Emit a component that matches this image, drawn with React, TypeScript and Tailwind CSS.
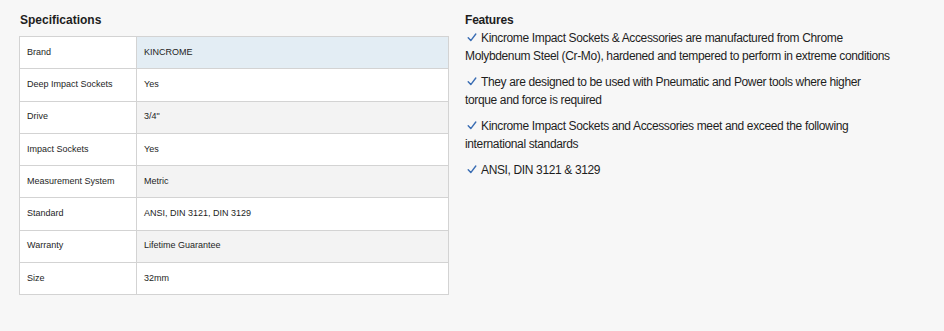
const specs = [
  { label: "Brand", value: "KINCROME" },
  { label: "Deep Impact Sockets", value: "Yes" },
  { label: "Drive", value: "3/4\"" },
  { label: "Impact Sockets", value: "Yes" },
  { label: "Measurement System", value: "Metric" },
  { label: "Standard", value: "ANSI, DIN 3121, DIN 3129" },
  { label: "Warranty", value: "Lifetime Guarantee" },
  { label: "Size", value: "32mm" },
]

const features = [
  "Kincrome Impact Sockets & Accessories are manufactured from Chrome Molybdenum Steel (Cr-Mo), hardened and tempered to perform in extreme conditions",
  "They are designed to be used with Pneumatic and Power tools where higher torque and force is required",
  "Kincrome Impact Sockets and Accessories meet and exceed the following international standards",
  "ANSI, DIN 3121 & 3129",
]

export default function App() {
  return (
    <main
      className="min-h-[331px] w-full bg-[#f7f7f7] text-[#1e1e1e] flex gap-4 pl-[19px] pt-[12px]"
      style={{ fontFamily: '"Liberation Sans", Arial, sans-serif' }}
    >
      <section className="w-[430px] shrink-0">
        <h3 className="text-[12px] font-bold leading-[16px] pl-px mb-[8px]">
          Specifications
        </h3>
        <table className="w-full border-collapse text-[9px]">
          <tbody>
            {specs.map((spec, index) => (
              <SpecRow
                key={spec.label}
                label={spec.label}
                value={spec.value}
                highlight={index === 0}
                striped={index % 2 === 0}
              />
            ))}
          </tbody>
        </table>
      </section>

      <section className="w-[428px]">
        <h3 className="text-[12px] font-bold leading-[16px] mb-[1px] tracking-[-0.2px]">
          Features
        </h3>
        <ul className="flex flex-col gap-[8px] text-[12px] leading-[18px] tracking-[-0.36px]">
          {features.map((item) => (
            <li key={item}>
              <CheckIcon />
              {item}
            </li>
          ))}
        </ul>
      </section>
    </main>
  )
}

function CheckIcon() {
  return (
    <svg
      width="10"
      height="9"
      viewBox="0 0 10 9"
      className="inline-block ml-[2px] mr-[4px] align-baseline"
      fill="none"
      stroke="#3a6db3"
      strokeWidth="1.4"
      strokeLinecap="round"
      strokeLinejoin="round"
    >
      <path d="M1.2 4.8 L3.8 7.6 L8.8 1" />
    </svg>
  )
}

function SpecRow({
  label,
  value,
  highlight,
  striped,
}: {
  label: string
  value: string
  highlight: boolean
  striped: boolean
}) {
  const valueBg = highlight
    ? "bg-[#e3edf4]"
    : striped
      ? "bg-[#f3f3f3]"
      : "bg-white"
  return (
    <tr className="h-[32.25px]">
      <td className="w-[117px] border border-[#d3d3d3] bg-white px-[7px] align-middle">
        {label}
      </td>
      <td className={`border border-[#d3d3d3] px-[7px] align-middle ${valueBg}`}>
        {value}
      </td>
    </tr>
  )
}
